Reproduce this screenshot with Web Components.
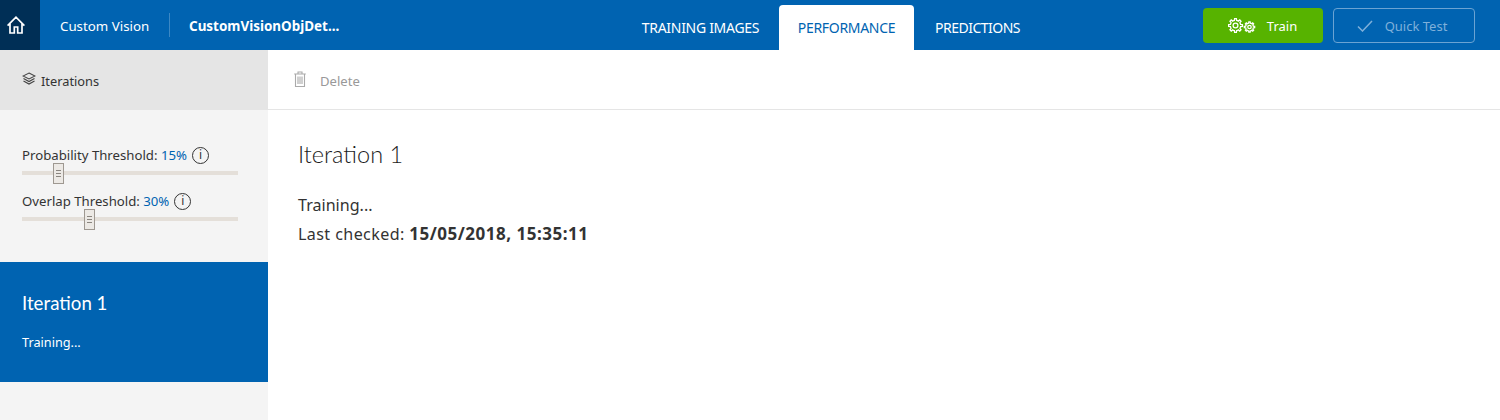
<!DOCTYPE html>
<html>
<head>
<meta charset="utf-8">
<title>Custom Vision</title>
<style>
    html, body { margin: 0; height: 100%; background: #fff; }
    body { font-family: "Noto Sans", "Open Sans", sans-serif; overflow: hidden; }
    app-shell { height: 420px; }
</style>
</head>
<body>
<app-shell>
    <top-bar slot="top"></top-bar>
    <side-panel slot="side"></side-panel>
    <main-panel slot="main"></main-panel>
</app-shell>

<script>
// outline of a cog, used by the train button
function gearPath(cx, cy, outer, inner, teeth) {
    let d = '';
    const step = Math.PI * 2 / teeth;
    for (let i = 0; i < teeth; i++) {
        const a = i * step;
        const pts = [
            [inner, a - step * 0.5],
            [inner, a - step * 0.28],
            [outer, a - step * 0.16],
            [outer, a + step * 0.16],
            [inner, a + step * 0.28]
        ];
        pts.forEach((p, n) => {
            const x = (cx + p[0] * Math.cos(p[1])).toFixed(2);
            const y = (cy + p[0] * Math.sin(p[1])).toFixed(2);
            d += (i === 0 && n === 0 ? 'M' : 'L') + x + ' ' + y;
        });
    }
    return d + 'Z';
}

class AppShell extends HTMLElement {
    constructor() {
        super();
        this.attachShadow({ mode: 'open' });
    }
    connectedCallback() {
        this.shadowRoot.innerHTML = `
            <style>
                :host { display: grid; grid-template-columns: 268px 1fr; grid-template-rows: 50px 1fr; }
                .top { grid-column: 1 / 3; }
            </style>
            <div class="top"><slot name="top"></slot></div>
            <slot name="side"></slot>
            <slot name="main"></slot>`;
    }
}

class TopBar extends HTMLElement {
    constructor() {
        super();
        this.attachShadow({ mode: 'open' });
    }
    connectedCallback() {
        this.shadowRoot.innerHTML = `
            <style>
                :host { display: flex; height: 50px; background: #0063b1; color: #fff; font-size: 13px; }
                .home { width: 40px; box-sizing: border-box; padding-right: 9px; background: #002f56; display: flex; align-items: center; justify-content: center; }
                .brand { width: 129px; box-sizing: border-box; padding: 1px 0 0 20px; display: flex; align-items: center; font-size: 13.300px; }
                .sep { width: 1px; height: 24px; margin-top: 13px; background: #3c88c4; }
                .project { width: 200px; box-sizing: border-box; padding: 1px 0 0 19px; display: flex; align-items: center; font-weight: 700; font-size: 13.450px; }
                .tabs { margin-left: 252px; display: flex; align-items: flex-end; height: 50px; }
                .tab { height: 45px; box-sizing: border-box; padding-top: 13px; text-align: center; font-size: 14px; letter-spacing: -0.3px; }
                .t1 { width: 157px; }
                .t2 { width: 135px; background: #fff; color: #0063b1; border-radius: 4px 4px 0 0; }
                .t3 { width: 127px; letter-spacing: -0.5px; }
                .actions { margin-left: auto; display: flex; gap: 10px; padding: 8px 25px 0 0; }
                .btn { height: 35px; box-sizing: border-box; border-radius: 4px; display: flex; align-items: center; justify-content: center; }
                .train { width: 120px; background: #57b300; gap: 11px; padding-right: 1px; }
                .quick { width: 142px; border: 1px solid #6aa3d3; color: #7fb0da; gap: 12px; padding-right: 4px; }
            </style>
            <div class="home">
                <svg width="18" height="18" viewBox="0 0 18 18" fill="none" stroke="#fff" stroke-width="1.700">
                    <path d="M.6 9.600 9 1.200l8.400 8.400M3 7.500V17h4.300v-6h3.400v6H15V7.500"/>
                </svg>
            </div>
            <div class="brand">Custom Vision</div>
            <div class="sep"></div>
            <div class="project">CustomVisionObjDet...</div>
            <div class="tabs">
                <div class="tab t1">TRAINING IMAGES</div>
                <div class="tab t2">PERFORMANCE</div>
                <div class="tab t3">PREDICTIONS</div>
            </div>
            <div class="actions">
                <div class="btn train">
                    <svg width="28" height="16" viewBox="0 0 28 16" fill="none" stroke="#fff" stroke-width="1.300">
                        <path d="${gearPath(7.5, 7.5, 7, 5.2, 8)}"/>
                        <circle cx="7.500" cy="7.500" r="2.400"/>
                        <path d="${gearPath(21.5, 9, 5.2, 3.9, 8)}"/>
                        <circle cx="21.500" cy="9" r="1.700"/>
                    </svg>
                    <span>Train</span>
                </div>
                <div class="btn quick">
                    <svg width="16" height="12" viewBox="0 0 16 12" fill="none" stroke="#7fb0da" stroke-width="1.500"><path d="M1 6.500 5.500 11 15 1"/></svg>
                    <span>Quick Test</span>
                </div>
            </div>`;
    }
}

class ThresholdSlider extends HTMLElement {
    constructor() {
        super();
        this.attachShadow({ mode: 'open' });
    }
    connectedCallback() {
        const pos = this.getAttribute('pos');
        this.shadowRoot.innerHTML = `
            <style>
                :host { display: block; width: 216px; color: #333; font-size: 13.200px; }
                .label { height: 22px; display: flex; align-items: center; white-space: pre; }
                .value { color: #0063b1; }
                .info { width: 17px; height: 17px; margin-left: 5px; box-sizing: border-box; border: 1.300px solid #333; border-radius: 50%; font-size: 12px; line-height: 14px; text-align: center; }
                .track { position: relative; height: 4px; margin-top: 5px; background: #e4dfd9; }
                .thumb { position: absolute; top: -8px; left: ${pos}px; width: 11px; height: 21px; box-sizing: border-box; background: #ece9e5; border: 1px solid #9e9891; display: flex; flex-direction: column; align-items: center; justify-content: center; gap: 2px; }
                .thumb i { display: block; width: 5px; height: 1px; background: #8a857f; }
            </style>
            <div class="label"><span>${this.getAttribute('label')}: </span><span class="value">${this.getAttribute('value')}</span><span class="info">i</span></div>
            <div class="track"><div class="thumb"><i></i><i></i><i></i></div></div>`;
    }
}

class IterationCard extends HTMLElement {
    constructor() {
        super();
        this.attachShadow({ mode: 'open' });
    }
    connectedCallback() {
        this.shadowRoot.innerHTML = `
            <style>
                :host { display: block; height: 120px; box-sizing: border-box; padding: 28px 22px 0; background: #0063b1; color: #fff; }
                .name { font-family: Lato, "Noto Sans", sans-serif; font-weight: 400; font-size: 18.700px; line-height: 26px; }
                .status { font-size: 12.700px; margin-top: 17px; line-height: 18px; }
            </style>
            <div class="name"><slot name="name"></slot></div>
            <div class="status"><slot name="status"></slot></div>`;
    }
}

class SidePanel extends HTMLElement {
    constructor() {
        super();
        this.attachShadow({ mode: 'open' });
    }
    connectedCallback() {
        this.shadowRoot.innerHTML = `
            <style>
                :host { display: block; height: 370px; background: #f4f4f4; }
                .head { height: 60px; background: #e5e5e5; box-sizing: border-box; padding: 2px 22px 0; display: flex; align-items: center; gap: 5px; font-size: 12.800px; color: #333; }
                .sliders { height: 152px; box-sizing: border-box; padding: 34px 22px 0; display: flex; flex-direction: column; gap: 15px; }
            </style>
            <div class="head">
                <svg width="14" height="14" viewBox="0 0 14 14" fill="none" stroke="#444" stroke-width="1.100" style="margin-top:-5px">
                    <path d="M7 1 13 4 7 7 1 4zM1.500 6.500 7 9.500l5.500-3M1.500 9 7 12l5.500-3"/>
                </svg>
                <span>Iterations</span>
            </div>
            <div class="sliders">
                <threshold-slider label="Probability Threshold" value="15%" pos="31"></threshold-slider>
                <threshold-slider label="Overlap Threshold" value="30%" pos="62"></threshold-slider>
            </div>
            <iteration-card><span slot="name">Iteration 1</span><span slot="status">Training...</span></iteration-card>`;
    }
}

class MainPanel extends HTMLElement {
    constructor() {
        super();
        this.attachShadow({ mode: 'open' });
    }
    connectedCallback() {
        this.shadowRoot.innerHTML = `
            <style>
                :host { display: block; color: #333; }
                .toolbar { height: 60px; box-sizing: border-box; border-bottom: 1px solid #e5e5e5; padding: 2px 0 0 26px; display: flex; align-items: center; gap: 14px; color: #999; font-size: 13.100px; }
                .toolbar svg { margin-top: -3px; }
                .content { padding: 29px 30px 0; }
                h1 { margin: 0; font-family: Lato, "Noto Sans", sans-serif; font-size: 23.500px; font-weight: 300; line-height: 30px; color: #1c1c1c; }
                p { margin: 0; font-size: 16.100px; line-height: 29px; }
                .lines { margin-top: 22px; }
                .lab { letter-spacing: 0.400px; }
                b { font-size: 17px; line-height: 1; letter-spacing: 0.500px; }
            </style>
            <div class="toolbar">
                <svg width="12" height="16" viewBox="0 0 12 16" fill="none" stroke="#aaa" stroke-width="1.100">
                    <path d="M.2 3h11.600M4 3V1h4v2M1.500 3v12.500h9V3M4 5.500v7.500M6 5.500v7.500M8 5.500v7.500"/>
                </svg>
                <span>Delete</span>
            </div>
            <div class="content">
                <h1>Iteration 1</h1>
                <div class="lines">
                    <p>Training...</p>
                    <p><span class="lab">Last checked: </span><b>15/05/2018, 15:35:11</b></p>
                </div>
            </div>`;
    }
}

customElements.define('threshold-slider', ThresholdSlider);
customElements.define('iteration-card', IterationCard);
customElements.define('top-bar', TopBar);
customElements.define('side-panel', SidePanel);
customElements.define('main-panel', MainPanel);
customElements.define('app-shell', AppShell);
</script>
</body>
</html>
